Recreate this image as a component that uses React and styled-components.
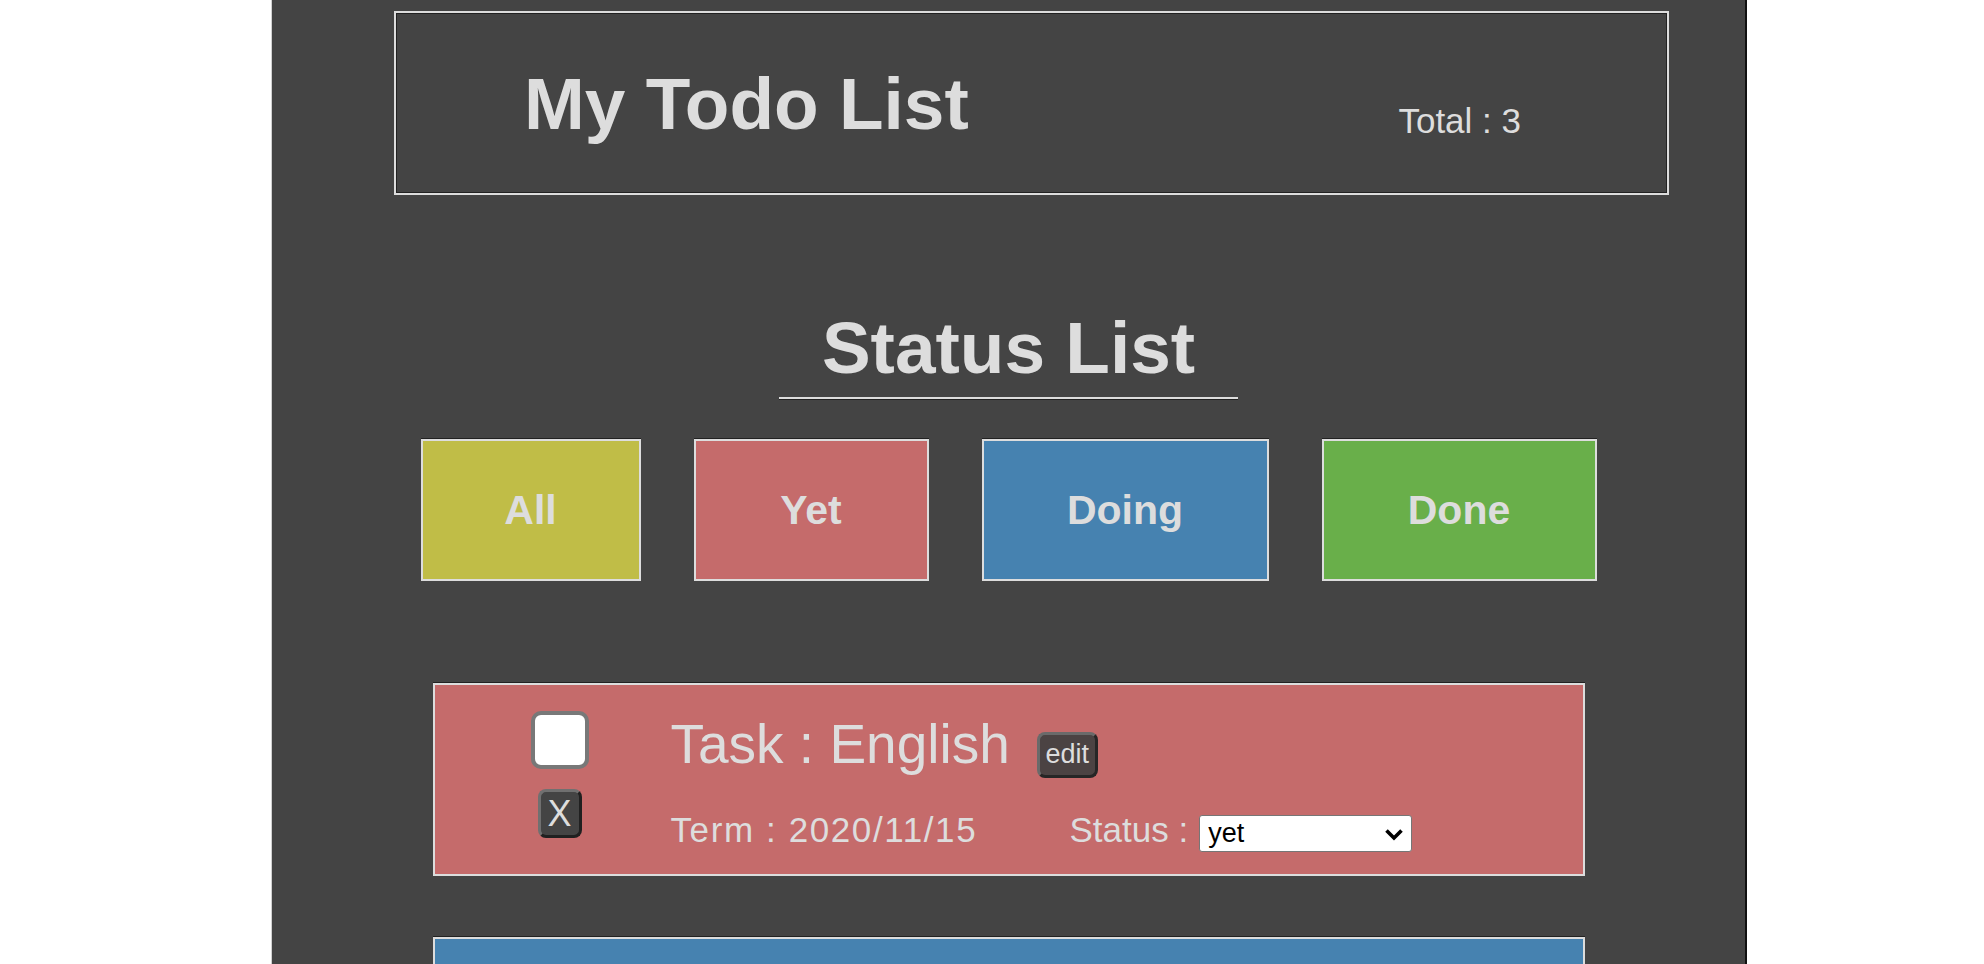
import styled, { createGlobalStyle } from 'styled-components';

const GlobalStyle = createGlobalStyle`
  html, body {
    margin: 0;
    padding: 0;
    background: #fff;
    font-family: "Liberation Sans", Arial, sans-serif;
  }
  * { box-sizing: border-box; }
`;

const STATUS_COLORS = {
  all: '#c0bd47',
  yet: '#c56b6b',
  doing: '#4682b0',
  done: '#69af4a',
};

const Panel = styled.main`
  margin-left: 271px;
  width: 1476px;
  min-height: 100vh;
  padding: 11px 0 60px;
  background-color: #444;
  border-left: 1px solid #d0d0d0;
  border-right: 2px solid #111;
  color: #ddd;
`;

const Header = styled.header`
  margin-left: 122px;
  width: 1275px;
  height: 184px;
  display: flex;
  align-items: center;
  justify-content: space-between;
  padding: 0 146px 0 128px;
  border: 2px solid #ddd;
  box-shadow: inset 0 0 0 1px #222;
`;

const Title = styled.h1`
  margin: 0;
  font-size: 73px;
  line-height: 73px;
  font-weight: bold;
`;

const Total = styled.p`
  margin: 34px 0 0;
  font-size: 35px;
  line-height: 35px;
`;

const SectionTitle = styled.h2`
  width: 459px;
  margin: 117px auto 0;
  padding-bottom: 13px;
  text-align: center;
  font-size: 73px;
  line-height: 72px;
  font-weight: bold;
  border-bottom: 2px solid #ddd;
  box-shadow: 0 1px 0 #222;
`;

const StatusNav = styled.nav`
  margin-top: 40px;
  display: flex;
  justify-content: center;
  gap: 53px;
`;

const StatusButton = styled.button`
  width: ${(p) => p.$w}px;
  height: 142px;
  background-color: ${(p) => p.$color};
  border: 2px solid #ddd;
  box-shadow: 0 -1px 0 #222;
  color: #ddd;
  font-family: "Liberation Sans", Arial, sans-serif;
  font-size: 41px;
  font-weight: bold;
  cursor: pointer;
`;

const TodoList = styled.ul`
  list-style: none;
  margin: 102px 0 0;
  padding: 0;
  display: flex;
  flex-direction: column;
  align-items: center;
  gap: 61px;
`;

const TodoCard = styled.li`
  width: 1152px;
  height: 193px;
  display: flex;
  align-items: flex-start;
  gap: 82px;
  padding: 26px 0 0 96px;
  background-color: ${(p) => p.$color};
  border: 2px solid #ddd;
  box-shadow: 0 -1px 0 #222;
`;

const Controls = styled.div`
  width: 58px;
  display: flex;
  flex-direction: column;
  align-items: center;
  gap: 20px;
`;

const Check = styled.input`
  appearance: none;
  margin: 0;
  width: 58px;
  height: 58px;
  background: #fff;
  border: 4px solid #787878;
  border-radius: 10px;
`;

const DeleteButton = styled.button`
  width: 44px;
  height: 49px;
  padding: 0;
  background: #444;
  border: 3px solid;
  border-color: #707070 #202020 #202020 #707070;
  border-radius: 8px;
  color: #ddd;
  font-family: "Liberation Sans", Arial, sans-serif;
  font-size: 36px;
  line-height: 36px;
`;

const Info = styled.div`
  display: flex;
  flex-direction: column;
  gap: 34px;
  padding-top: 6px;
`;

const Row = styled.div`
  display: flex;
  align-items: baseline;
  gap: ${(p) => p.$gap || 0}px;
`;

const TaskName = styled.span`
  font-size: 55px;
  line-height: 54px;
  color: #ddd;
`;

const EditButton = styled.button`
  width: 61px;
  height: 46px;
  padding: 6px 0 7px;
  background: #4b4343;
  border: 3px solid;
  border-color: #6a6a6a #262626 #262626 #6a6a6a;
  border-radius: 8px;
  color: #ddd;
  font-family: "Liberation Sans", Arial, sans-serif;
  font-size: 27px;
  line-height: 27px;
`;

const Meta = styled.span`
  min-width: ${(p) => p.$minW || 0}px;
  font-size: 35px;
  line-height: 35px;
  color: #ddd;
  letter-spacing: ${(p) => p.$spacing || 0}px;
`;

const SelectWrap = styled.span`
  position: relative;
  display: inline-flex;
  margin-left: 11px;
  svg {
    position: absolute;
    right: 8px;
    top: 13px;
    pointer-events: none;
  }
`;

const StatusSelect = styled.select`
  appearance: none;
  width: 213px;
  height: 37px;
  padding: 0 0 0 8px;
  background: #fff;
  border: 1px solid #767676;
  border-radius: 3px;
  color: #000;
  font-family: "Liberation Sans", Arial, sans-serif;
  font-size: 27px;
`;

const todos = [
  { id: 1, task: 'English', term: '2020/11/15', status: 'yet' },
  { id: 2, task: 'Math', term: '2020/11/20', status: 'doing' },
  { id: 3, task: 'Science', term: '2020/11/25', status: 'done' },
];

const filters = [
  { key: 'all', label: 'All', w: 220 },
  { key: 'yet', label: 'Yet', w: 235 },
  { key: 'doing', label: 'Doing', w: 287 },
  { key: 'done', label: 'Done', w: 275 },
];

const Chevron = () => (
  <svg width="20" height="13" viewBox="0 0 20 13">
    <polyline points="2.5,2.5 10,10 17.5,2.5" fill="none" stroke="#000" strokeWidth="3.6" />
  </svg>
);

const App = () => {
  return (
    <>
      <GlobalStyle />
      <Panel>
        <Header>
          <Title>My Todo List</Title>
          <Total>Total : {todos.length}</Total>
        </Header>

        <SectionTitle>Status List</SectionTitle>
        <StatusNav>
          {filters.map(({ key, label, w }) => (
            <StatusButton key={key} $w={w} $color={STATUS_COLORS[key]}>
              {label}
            </StatusButton>
          ))}
        </StatusNav>

        <TodoList>
          {todos.map(({ id, task, term, status }) => (
            <TodoCard key={id} $color={STATUS_COLORS[status]}>
              <Controls>
                <Check type="checkbox" />
                <DeleteButton>X</DeleteButton>
              </Controls>
              <Info>
                <Row $gap={27}>
                  <TaskName>Task : {task}</TaskName>
                  <EditButton>edit</EditButton>
                </Row>
                <Row $gap={84}>
                  <Meta $minW={315} $spacing={1.6}>Term : {term}</Meta>
                  <Row>
                    <Meta>Status :</Meta>
                    <SelectWrap>
                      <StatusSelect defaultValue={status}>
                        <option value="yet">yet</option>
                        <option value="doing">doing</option>
                        <option value="done">done</option>
                      </StatusSelect>
                      <Chevron />
                    </SelectWrap>
                  </Row>
                </Row>
              </Info>
            </TodoCard>
          ))}
        </TodoList>
      </Panel>
    </>
  );
};

export default App;
